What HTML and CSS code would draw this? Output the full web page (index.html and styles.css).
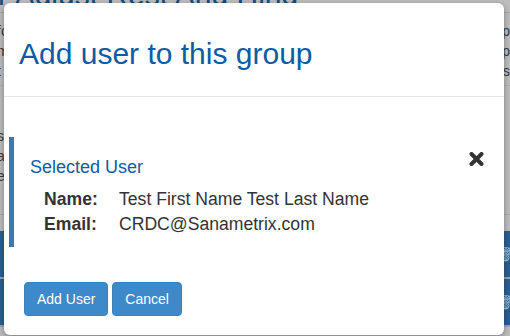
FILE: index.html
```html
<!DOCTYPE html>
<html>
<head>
  <meta charset="UTF-8">
  <title>Add user to this group</title>
  <link rel="stylesheet" href="styles.css">
</head>
<body>
  <div class="page">
    <h1 class="page-title">r Adjust Rest And Hlnd</h1>
    <div class="page-text">
      <div class="text-row"><span>fo</span><span>op</span></div>
      <div class="text-row"><span>m</span><span>op</span></div>
      <div class="text-row"><span>t</span><span>as</span></div>
    </div>
    <div class="page-text second">
      <div class="text-row"><span>s</span><span></span></div>
      <div class="text-row"><span>a</span><span></span></div>
      <div class="text-row"><span>e</span><span></span></div>
    </div>
    <div class="grid-band">
      <div class="band-row"><span class="trash">&#128465;</span></div>
      <div class="band-row"><span class="trash">&#128465;</span></div>
    </div>
  </div>

  <div class="modal">
    <div class="modal-header">
      <h2>Add user to this group</h2>
    </div>

    <div class="modal-body">
      <div class="selected-box">
        <div class="selected-head">
          <h3>Selected User</h3>
          <svg class="remove" width="15" height="14" viewBox="0 0 15 14">
            <path d="M2.5 2 L12.5 12 M12.5 2 L2.5 12" stroke="#333" stroke-width="4" stroke-linecap="round"/>
          </svg>
        </div>
        <div class="info-row"><span class="info-label">Name:</span><span>Test First Name Test Last Name</span></div>
        <div class="info-row"><span class="info-label">Email:</span><span>CRDC@Sanametrix.com</span></div>
      </div>
    </div>

    <div class="modal-footer">
      <button class="btn">Add User</button>
      <button class="btn">Cancel</button>
    </div>
  </div>
</body>
</html>
```

FILE: styles.css
```css
body {
  margin: 0;
  width: 510px;
  height: 336px;
  overflow: hidden;
  background: #bdbdbd;
  font-family: "Liberation Sans", Arial, sans-serif;
}

.page {
  display: flex;
  flex-direction: column;
}

.page-title {
  margin: -22px 0 0 -2px;
  height: 34px;
  font-size: 30px;
  font-weight: normal;
  color: #0f4c86;
  white-space: nowrap;
  border-bottom: 1px solid #a9a9a9;
}

.page-text {
  font-size: 14px;
  color: #3a3a3a;
  padding: 8px 0 4px;
}

.page-text.second {
  border-top: 1px solid #b0b0b0;
  padding-top: 40px;
  height: 84px;
  border-bottom: 1px solid #a9a9a9;
}

.text-row {
  display: flex;
  justify-content: space-between;
  line-height: 20px;
  margin-left: -3px;
}

.grid-band {
  margin-top: 16px;
  display: flex;
  flex-direction: column;
}

.band-row {
  height: 46px;
  background: #2b5f92;
  border-bottom: 2px solid #9aa4ad;
  display: flex;
  justify-content: flex-end;
  align-items: center;
}

.trash {
  color: #9ec3df;
  font-size: 14px;
  margin-right: -4px;
}

.modal {
  position: absolute;
  left: 4px;
  top: 3px;
  width: 500px;
  height: 332px;
  background: #fff;
  border-radius: 6px;
  box-shadow: 0 2px 6px rgba(0, 0, 0, 0.35);
  display: flex;
  flex-direction: column;
}

.modal-header {
  padding: 35px 15px 27px;
  border-bottom: 1px solid #e5e5e5;
}

.modal-header h2 {
  margin: 0;
  font-size: 30px;
  line-height: 31px;
  font-weight: normal;
  color: #0b5ba7;
}

.modal-body {
  padding: 40px 20px 0 5px;
}

.selected-box {
  border-left: 5px solid #337ab7;
  padding: 20px 0 10px 16px;
  color: #333;
}

.selected-head {
  display: flex;
  justify-content: space-between;
  align-items: flex-start;
}

.selected-head h3 {
  margin: 0 0 10px;
  font-size: 18px;
  line-height: 20px;
  font-weight: normal;
  color: #0b5ba7;
}

.remove {
  margin-top: -5px;
}

.info-row {
  display: flex;
  font-size: 17.6px;
  line-height: 25px;
  padding-left: 14px;
}

.info-label {
  width: 75px;
  font-weight: bold;
}

.modal-footer {
  padding: 35px 20px 0;
  display: flex;
  gap: 4px;
}

.btn {
  font-family: "Liberation Sans", Arial, sans-serif;
  font-size: 14px;
  line-height: 20px;
  padding: 6px 12px;
  color: #fff;
  background: #3e89c9;
  border: 1px solid #3a80bd;
  border-radius: 4px;
}
```
